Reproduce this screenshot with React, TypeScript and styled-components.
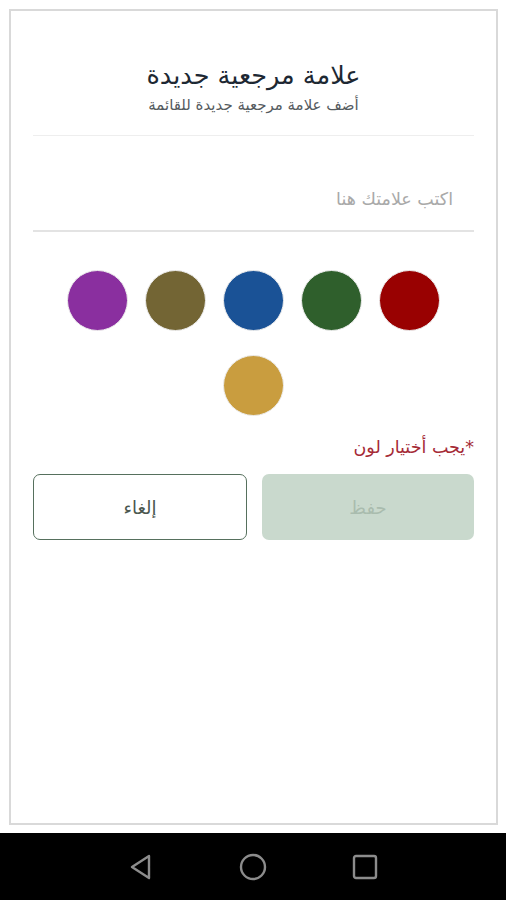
import React from "react";
import styled, { createGlobalStyle } from "styled-components";

const Global = createGlobalStyle`
  html, body { margin: 0; padding: 0; background: #fff; }
  body { font-family: "DejaVu Sans", "Noto Sans", sans-serif; }
`;

const Screen = styled.div`
  width: 506px;
  height: 900px;
  display: flex;
  flex-direction: column;
  background: #fff;
`;

const Body = styled.div`
  flex: 1;
  display: flex;
  padding: 9px 8px 8px 9px;
`;

const Card = styled.div`
  flex: 1;
  border: 2px solid #d9d9d9;
  display: flex;
  flex-direction: column;
  padding: 0 22px;
  direction: rtl;
`;

const Header = styled.div`
  display: flex;
  flex-direction: column;
  align-items: center;
  padding-top: 49px;
  padding-bottom: 20px;
  border-bottom: 1px solid #eeeeee;
`;

const Title = styled.div`
  font-size: 25.5px;
  color: #1d2833;
  line-height: 30px;
`;

const Subtitle = styled.div`
  font-size: 15px;
  color: #555b60;
  line-height: 20px;
  margin-top: 5px;
`;

const Input = styled.input`
  margin-top: 44px;
  border: none;
  border-bottom: 2px solid #e3e3e3;
  outline: none;
  background: transparent;
  font-family: inherit;
  font-size: 17.5px;
  padding: 0 21px 12px 0;
  height: 52px;
  box-sizing: border-box;
  direction: rtl;
  color: #333;
  &::placeholder { color: #a9a9a9; }
`;

const Swatches = styled.div`
  display: flex;
  flex-wrap: wrap;
  justify-content: center;
  gap: 24px 17px;
  padding: 0 11px;
  margin-top: 38px;
`;

const Swatch = styled.button<{ $color: string }>`
  width: 61px;
  height: 61px;
  border-radius: 50%;
  background: ${(p) => p.$color};
  border: 1.5px solid #ececec;
  padding: 0;
  cursor: pointer;
`;

const Error = styled.div`
  margin-top: 19px;
  font-size: 17.5px;
  color: #a52a36;
  line-height: 24px;
`;

const Actions = styled.div`
  display: flex;
  gap: 15px;
  margin-top: 15px;
`;

const Button = styled.button<{ $variant: "primary" | "outline" }>`
  flex: 1;
  height: 66px;
  border-radius: 7px;
  font-family: inherit;
  font-size: 18px;
  cursor: pointer;
  ${(p) =>
    p.$variant === "primary"
      ? `background: #c9d9cd; border: none; color: #a9bcae;`
      : `background: #fff; border: 1.5px solid #56705d; color: #4a564e;`}
`;

const NavBar = styled.div`
  height: 67px;
  background: #000;
  display: flex;
  align-items: center;
  justify-content: center;
  gap: 82px;
`;

const NavIcon = styled.svg`
  width: 30px;
  height: 30px;
  stroke: #8c8c8c;
  stroke-width: 2.4;
  fill: none;
`;

const colors = ["#990101", "#2f5f2c", "#1a5296", "#736534", "#8a2f9f", "#c99d3f"];

export default function App() {
  return (
    <Screen>
      <Global />
      <Body>
        <Card>
          <Header>
            <Title>علامة مرجعية جديدة</Title>
            <Subtitle>أضف علامة مرجعية جديدة للقائمة</Subtitle>
          </Header>
          <Input placeholder="اكتب علامتك هنا" />
          <Swatches>
            {colors.map((c) => (
              <Swatch key={c} $color={c} aria-label={c} />
            ))}
          </Swatches>
          <Error>*يجب أختيار لون</Error>
          <Actions>
            <Button $variant="primary">حفظ</Button>
            <Button $variant="outline">إلغاء</Button>
          </Actions>
        </Card>
      </Body>
      <NavBar>
        <NavIcon viewBox="0 0 30 30">
          <path d="M23 4 L6 15 L23 26 Z" strokeLinejoin="round" />
        </NavIcon>
        <NavIcon viewBox="0 0 30 30">
          <circle cx="15" cy="15" r="12" />
        </NavIcon>
        <NavIcon viewBox="0 0 30 30">
          <rect x="4" y="4" width="22" height="22" rx="2" />
        </NavIcon>
      </NavBar>
    </Screen>
  );
}
